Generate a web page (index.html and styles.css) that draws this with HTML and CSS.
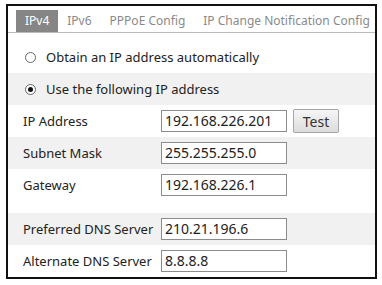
FILE: index.html
```html
<!DOCTYPE html>
<html lang="en">
<head>
    <meta charset="UTF-8">
    <title>Network Config</title>
    <link rel="stylesheet" href="styles.css">
</head>
<body>
    <div class="panel">
        <ul class="tabs">
            <li class="active">IPv4</li>
            <li>IPv6</li>
            <li>PPPoE Config</li>
            <li>IP Change Notification Config</li>
        </ul>

        <div class="content">
            <div class="row">
                <span class="radio"></span>
                <span>Obtain an IP address automatically</span>
            </div>
            <div class="row shade">
                <span class="radio checked"></span>
                <span>Use the following IP address</span>
            </div>

            <div class="row">
                <span class="label">IP Address</span>
                <span class="field">192.168.226.201</span>
                <button class="btn">Test</button>
            </div>
            <div class="row shade">
                <span class="label">Subnet Mask</span>
                <span class="field">255.255.255.0</span>
            </div>
            <div class="row">
                <span class="label">Gateway</span>
                <span class="field">192.168.226.1</span>
            </div>

            <div class="spacer"></div>

            <div class="row shade">
                <span class="label">Preferred DNS Server</span>
                <span class="field">210.21.196.6</span>
            </div>
            <div class="row">
                <span class="label">Alternate DNS Server</span>
                <span class="field">8.8.8.8</span>
            </div>
        </div>
    </div>
</body>
</html>
```

FILE: styles.css
```css
body {
    margin: 0;
    padding: 4px 0 0 6px;
    background: #fff;
    font-family: 'Noto Sans', sans-serif;
    font-size: 13px;
    color: #222;
}

.panel {
    width: 367px;
    height: 271px;
    border: 2px solid #111;
    overflow: hidden;
}

/* tab strip */
.tabs {
    display: flex;
    margin: 4px 0 0;
    padding: 0 0 0 8px;
    list-style: none;
    border-bottom: 1px solid #bbb;
    white-space: nowrap;
}

.tabs li {
    height: 22px;
    line-height: 22px;
    padding: 0 9px 0 9px;
    font-size: 12px;
    color: #8a8a8a;
}

.tabs li.active {
    background: #868686;
    color: #fff;
}

.content {
    padding-top: 8px;
}

.row {
    display: flex;
    align-items: center;
    height: 32px;
    padding-left: 15px;
    white-space: nowrap;
}

.row.shade {
    background: #f1f1f1;
}

.spacer {
    height: 12px;
}

.radio {
    width: 9px;
    height: 9px;
    border: 1px solid #666;
    border-radius: 50%;
    background: #fff;
    margin: 0 10px 0 2px;
    position: relative;
}

.radio.checked::after {
    content: '';
    position: absolute;
    top: 2px;
    left: 2px;
    width: 5px;
    height: 5px;
    border-radius: 50%;
    background: #111;
}

.label {
    width: 138px;
}

.field {
    box-sizing: border-box;
    width: 126px;
    height: 22px;
    line-height: 20px;
    padding: 0 3px;
    border: 1px solid #8c8c8c;
    background: #fff;
    font-size: 14px;
}

.btn {
    margin-left: 6px;
    width: 46px;
    height: 24px;
    padding: 0;
    font-family: inherit;
    font-size: 14px;
    color: #333;
    border: 1px solid #a5a5a5;
    border-radius: 2px;
    background: linear-gradient(#f6f6f6, #dcdcdc);
}
```
